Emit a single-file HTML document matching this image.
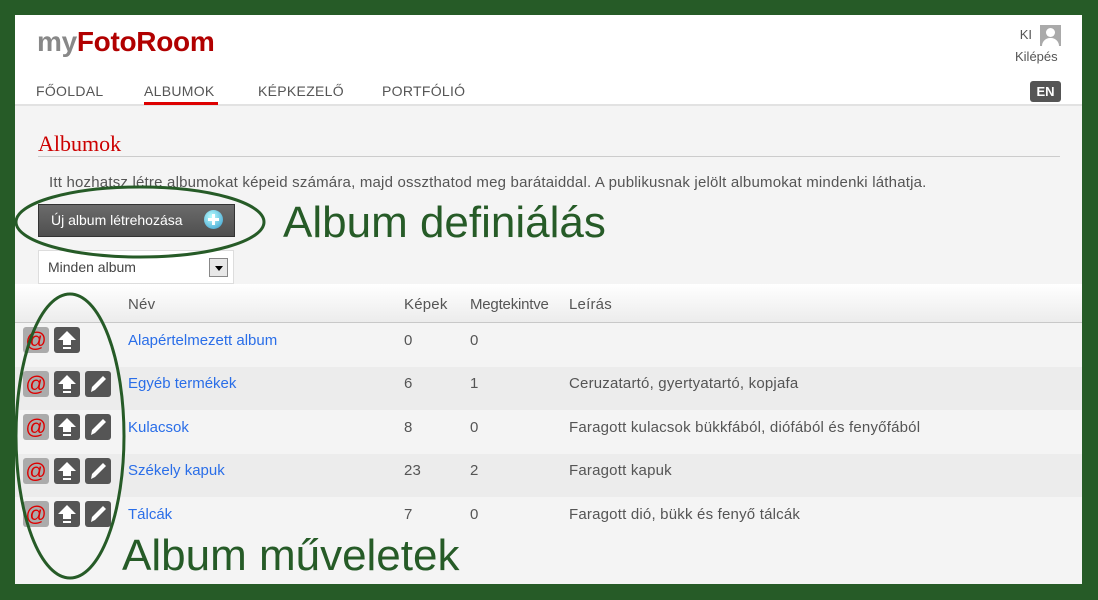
<!DOCTYPE html>
<html><head><meta charset="utf-8"><style>
*{margin:0;padding:0;box-sizing:border-box}
body{width:1098px;height:600px;background:#265b27;position:relative;overflow:hidden;font-family:"Liberation Sans",sans-serif}
.page{position:absolute;left:15px;top:15px;width:1067px;height:569px;background:#fff;overflow:hidden}
.gray{position:absolute;left:0;top:89px;width:1067px;height:480px;background:#f4f4f4;border-top:2px solid #e2e2e2}
.a{position:absolute;white-space:nowrap}
.logo{left:22px;top:11px;font-size:28px;font-weight:bold;letter-spacing:-0.3px}
.nav{top:68px;font-size:14px;color:#555;letter-spacing:0.3px}
.btn{left:23px;top:189px;width:197px;height:33px;background:linear-gradient(#6b6b6b,#4f4f4f);border:1px solid #333;color:#fff;font-size:14px;padding:7px 0 0 12px}
.plus{position:absolute;left:165px;top:5px;width:19px;height:19px;border-radius:50%;background:radial-gradient(circle at 40% 35%,#bff,#39c)}
.plus:before{content:"";position:absolute;left:8px;top:4px;width:3px;height:11px;background:#fff}
.plus:after{content:"";position:absolute;left:4px;top:8px;width:11px;height:3px;background:#fff}
.sel{left:23px;top:235px;width:196px;height:34px;background:#fff;border:1px solid #ddd;font-size:14px;color:#444;padding:8px 0 0 9px}
.dd{position:absolute;left:170px;top:7px;width:19px;height:19px;border:1px solid #888;background:#e8e8e8}
.dd:after{content:"";position:absolute;left:5px;top:7px;border:4px solid transparent;border-top:5px solid #000}
.th{top:269px;left:0;width:1067px;height:39px;background:linear-gradient(#fff,#ececec);border-bottom:1px solid #c8c8c8}
.row{left:0;width:1067px;height:44px}
.t{font-size:15px;color:#555;letter-spacing:0.2px}
.lnk{color:#2a6ee8;font-size:15px}
.ann{color:#265b27;font-size:44px}
</style></head><body>
<div class="page">
<div class="gray"></div>
<div class="a logo"><span style="color:#888">my</span><span style="color:#b10000">FotoRoom</span></div>
<div class="a" style="right:50px;top:12px;font-size:13px;color:#555">KI</div>
<div class="a" style="left:1025px;top:10px;width:21px;height:21px;background:#aaa;overflow:hidden"><div style="position:absolute;left:6px;top:3px;width:9px;height:9px;border-radius:50%;background:#fff"></div><div style="position:absolute;left:2px;top:13px;width:17px;height:12px;border-radius:8px 8px 0 0;background:#fff"></div></div>
<div class="a" style="left:1000px;top:34px;font-size:13px;color:#555">Kilépés</div>
<div class="a" style="left:1015px;top:66px;width:31px;height:21px;background:#555;border-radius:3px;color:#fff;font-weight:bold;font-size:13px;text-align:center;line-height:21px">EN</div>
<div class="a nav" style="left:21px">FŐOLDAL</div>
<div class="a nav" style="left:129px">ALBUMOK</div>
<div class="a" style="left:129px;top:87px;width:74px;height:3px;background:#d00"></div>
<div class="a nav" style="left:243px">KÉPKEZELŐ</div>
<div class="a nav" style="left:367px">PORTFÓLIÓ</div>
<div class="a" style="left:23px;top:116px;font-family:'Liberation Serif',serif;font-size:22px;color:#c00">Albumok</div>
<div class="a" style="left:23px;top:141px;width:1022px;height:1px;background:#ccc"></div>
<div class="a t" style="left:34px;top:159px">Itt hozhatsz létre albumokat képeid számára, majd osszthatod meg barátaiddal. A publikusnak jelölt albumokat mindenki láthatja.</div>
<div class="a btn">Új album létrehozása<div class="plus"></div></div>
<div class="a sel">Minden album<div class="dd"></div></div>
<div class="a th"></div>
<div class="a t" style="left:113px;top:281px">Név</div>
<div class="a t" style="left:389px;top:281px">Képek</div>
<div class="a t" style="left:455px;top:281px;letter-spacing:-0.2px">Megtekintve</div>
<div class="a t" style="left:554px;top:281px">Leírás</div>
<div class="a row" style="top:308px;background:#f4f4f4"></div>
<div class="a row" style="top:352px;background:#ececec"></div>
<div class="a row" style="top:395px;background:#f4f4f4"></div>
<div class="a row" style="top:439px;background:#ececec"></div>
<div class="a row" style="top:482px;height:72px;background:#f4f4f4"></div>

<div class="a lnk" style="left:113px;top:317px">Alapértelmezett album</div><div class="a t" style="left:389px;top:317px">0</div><div class="a t" style="left:455px;top:317px">0</div>
<div class="a lnk" style="left:113px;top:360px">Egyéb termékek</div><div class="a t" style="left:389px;top:360px">6</div><div class="a t" style="left:455px;top:360px">1</div><div class="a t" style="left:554px;top:360px">Ceruzatartó, gyertyatartó, kopjafa</div>
<div class="a lnk" style="left:113px;top:404px">Kulacsok</div><div class="a t" style="left:389px;top:404px">8</div><div class="a t" style="left:455px;top:404px">0</div><div class="a t" style="left:554px;top:404px">Faragott kulacsok bükkfából, diófából és fenyőfából</div>
<div class="a lnk" style="left:113px;top:447px">Székely kapuk</div><div class="a t" style="left:389px;top:447px">23</div><div class="a t" style="left:455px;top:447px">2</div><div class="a t" style="left:554px;top:447px">Faragott kapuk</div>
<div class="a lnk" style="left:113px;top:491px">Tálcák</div><div class="a t" style="left:389px;top:491px">7</div><div class="a t" style="left:455px;top:491px">0</div><div class="a t" style="left:554px;top:491px">Faragott dió, bükk és fenyő tálcák</div>

<svg class="a" style="left:0;top:0" width="1067" height="569">
<defs>
<g id="up"><rect width="26" height="26" rx="3" fill="#555"/><path d="M13 4 L22 13 L17 13 L17 18 L9 18 L9 13 L4 13Z" fill="#fff"/><rect x="9" y="20" width="8" height="2" fill="#fff"/></g>
<g id="pen"><rect width="26" height="26" rx="3" fill="#555"/><path d="M18 5 L21 8 L10 19 L6 21 L7 16Z" fill="#fff"/></g>
<g id="at"><rect width="26" height="26" rx="3" fill="#ababab"/><text x="13" y="20" font-size="21" fill="#d00" text-anchor="middle" font-family="Liberation Sans">@</text></g>
</defs>
<use href="#at" x="8" y="312"/><use href="#up" x="39" y="312"/>
<use href="#at" x="8" y="356"/><use href="#up" x="39" y="356"/><use href="#pen" x="70" y="356"/>
<use href="#at" x="8" y="399"/><use href="#up" x="39" y="399"/><use href="#pen" x="70" y="399"/>
<use href="#at" x="8" y="443"/><use href="#up" x="39" y="443"/><use href="#pen" x="70" y="443"/>
<use href="#at" x="8" y="486"/><use href="#up" x="39" y="486"/><use href="#pen" x="70" y="486"/>
<ellipse cx="125" cy="207" rx="124" ry="35" fill="none" stroke="#265b27" stroke-width="3"/>
<ellipse cx="55" cy="421" rx="54" ry="142" fill="none" stroke="#265b27" stroke-width="3"/>
</svg>
<div class="a ann" style="left:268px;top:183px">Album definiálás</div>
<div class="a ann" style="left:107px;top:516px">Album műveletek</div>
</div>
</body></html>
